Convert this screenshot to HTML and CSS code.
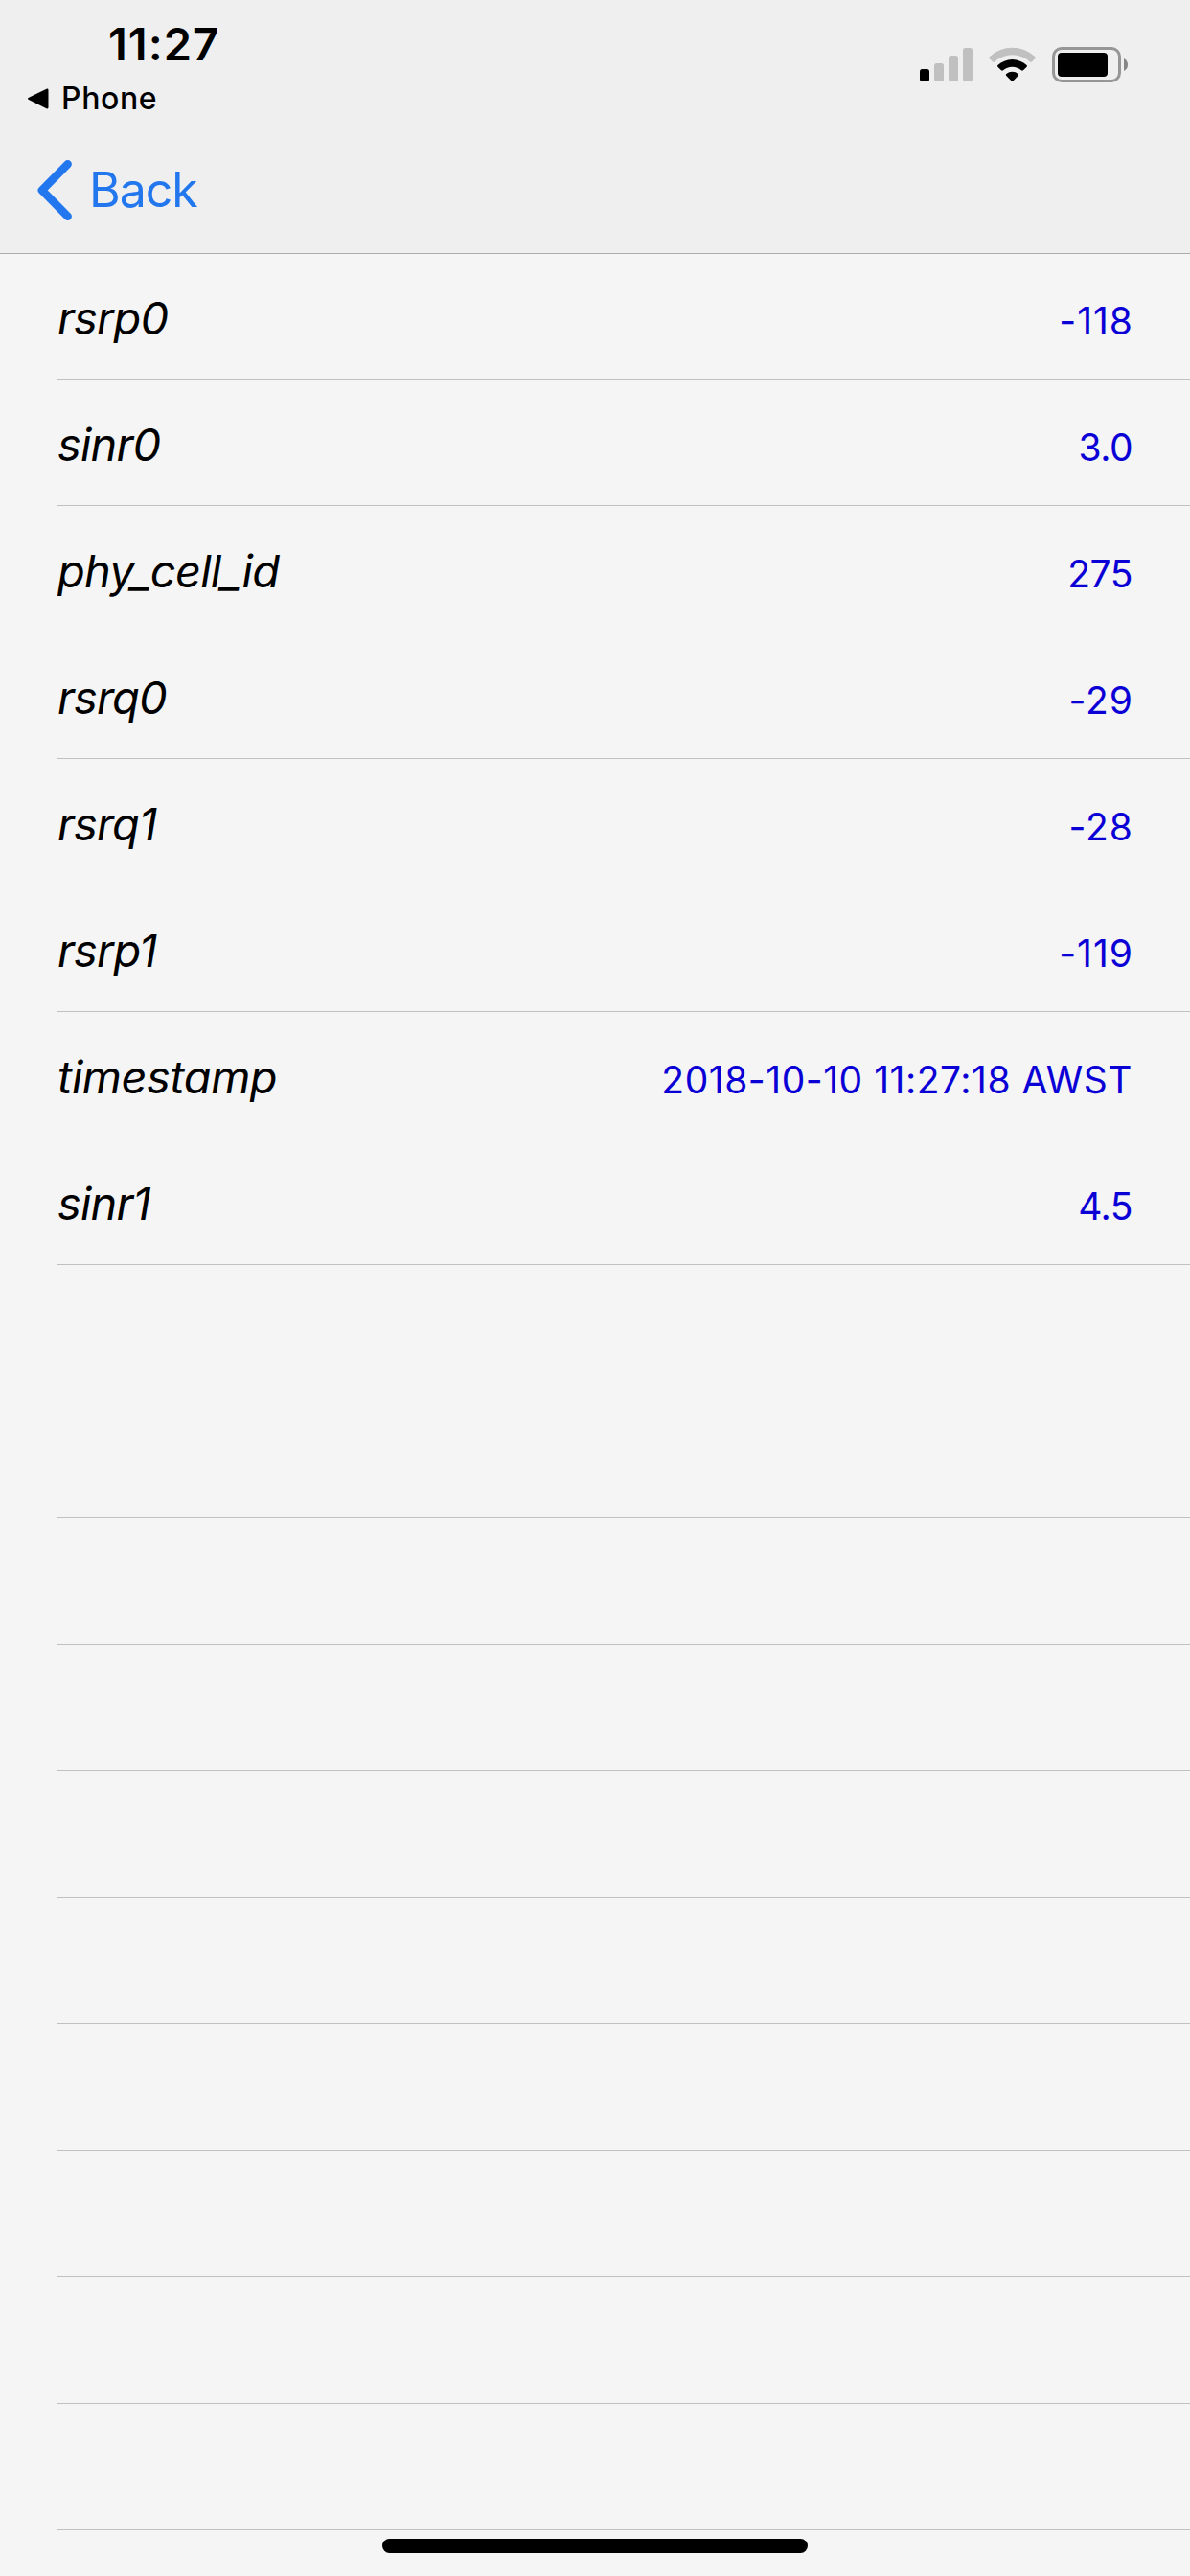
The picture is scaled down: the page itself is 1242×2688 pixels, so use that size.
FILE: index.html
```html
<!DOCTYPE html>
<html lang="en">
<head>
<meta charset="utf-8">
<title>Serving Cell</title>
<link rel="stylesheet" href="styles.css">
</head>
<body>
<div class="screen">
  <header class="header">
    <div class="status">
      <div class="status-left">
        <div class="clock">11:27</div>
        <div class="return">
          <svg class="return-icon" width="22" height="22" viewBox="0 0 22 22"><path d="M1 9.8 L19.5 .7 Q21.5 0 21.5 2 V20 Q21.5 22 19.5 21.3 L1 12 Q-1 10.9 1 9.8Z"/></svg>
          <span class="return-text">Phone</span>
        </div>
      </div>
      <div class="status-right">
        <svg class="signal" width="55" height="35" viewBox="0 0 55 35">
          <rect x="0" y="22" width="10" height="13" rx="2.5" fill="#000"/>
          <g fill="#c0c0c0"><rect x="15" y="16" width="10" height="19" rx="2.5"/><rect x="30" y="8" width="10" height="27" rx="2.5"/><rect x="45" y="0" width="10" height="35" rx="2.5"/></g>
        </svg>
        <svg class="wifi" width="49" height="36" viewBox="0 0 49 36">
          <path fill="#c0c0c0" d="M.6 10.2 A35 35 0 0 1 48.4 10.2 Q49.2 11.2 48.4 12 L45 15.5 Q44 16.3 43 15.5 A27.5 27.5 0 0 0 6 15.5 Q5 16.3 4 15.5 L.6 12 Q-.2 11.2 .6 10.2Z"/>
          <path d="M9.4 19 A22.3 22.3 0 0 1 39.6 19 Q40.4 20 39.6 20.8 L36 24.3 Q35 25.2 34 24.3 A14.5 14.5 0 0 0 15 24.3 Q14 25.2 13 24.3 L9.4 20.8 Q8.6 20 9.4 19Z"/>
          <path d="M18.3 28 A9.8 9.8 0 0 1 30.7 28 Q31.6 29 30.7 30 L25.5 35.3 Q24.5 36.2 23.5 35.3 L18.3 30 Q17.4 29 18.3 28Z"/>
        </svg>
        <svg class="battery" width="79" height="37" viewBox="0 0 79 37">
          <rect x="1.5" y="1.5" width="69" height="34" rx="8.5" fill="none" stroke="#969696" stroke-width="3"/>
          <rect x="6" y="6" width="52" height="25" rx="4"/>
          <path fill="#868686" d="M75 12 Q79 14 79 18.5 T75 25Z"/>
        </svg>
      </div>
    </div>
    <nav class="nav">
      <svg class="chevron" width="36" height="63" viewBox="0 0 36 63"><path d="M31.7 4.3 L4.8 31.5 L31.7 58.7" fill="none" stroke="#2277ee" stroke-width="8.4" stroke-linecap="round" stroke-linejoin="round"/></svg>
      <span class="back">Back</span>
    </nav>
  </header>
  <main class="list">
    <div class="row"><span class="label">rsrp0</span><span class="value negative">-118</span></div>
    <div class="row"><span class="label">sinr0</span><span class="value">3.0</span></div>
    <div class="row"><span class="label">phy_cell_id</span><span class="value">275</span></div>
    <div class="row"><span class="label">rsrq0</span><span class="value negative">-29</span></div>
    <div class="row"><span class="label">rsrq1</span><span class="value negative">-28</span></div>
    <div class="row"><span class="label">rsrp1</span><span class="value negative">-119</span></div>
    <div class="row"><span class="label wide">timestamp</span><span class="value date">2018-10-10 11:27:18 AWST</span></div>
    <div class="row"><span class="label">sinr1</span><span class="value">4.5</span></div>
    <div class="row"></div>
    <div class="row"></div>
    <div class="row"></div>
    <div class="row"></div>
    <div class="row"></div>
    <div class="row"></div>
    <div class="row"></div>
    <div class="row"></div>
    <div class="row"></div>
    <div class="row"></div>
  </main>
  <div class="home-indicator"></div>
</div>
</body>
</html>
```
FILE: styles.css
```css
* { box-sizing: border-box; }
body { margin: 0; background: #f5f5f5; color: #000; font-family: Inter, "Liberation Sans", sans-serif; }
svg { display: block; }
.screen { position: relative; height: 2688px; overflow: hidden; }
.header { height: 265px; background: #efefef; border-bottom: 1px solid #acacac; }
.status { display: flex; justify-content: space-between; height: 132px; padding: 16px 65px 0 29px; }
.clock { padding-left: 84px; font-size: 47px; font-weight: 600; line-height: 60px; letter-spacing: 1px; }
.return { display: flex; align-items: center; gap: 13px; margin-top: 7px; }
.return-text { font-size: 32px; font-weight: 500; line-height: 40px; letter-spacing: 0.6px; }
.status-right { display: flex; align-items: flex-start; padding-top: 33px; }
.signal { margin-top: 1px; }
.wifi { margin-left: 17px; }
.battery { margin-left: 17px; }
.nav { display: flex; align-items: center; gap: 18px; height: 132px; padding-left: 39px; }
.back { font-size: 50px; line-height: 60px; letter-spacing: -1px; color: #2277ee; }
.list { margin-top: -1px; }
.row { display: flex; align-items: baseline; justify-content: space-between; height: 132px; margin-left: 60px; padding: 3px 60px 0 0; border-bottom: 1px solid #c1c1c2; }
.label { font-size: 47px; font-style: italic; line-height: 129px; letter-spacing: -0.8px; }
.label.wide { letter-spacing: -0.5px; }
.value { font-size: 39px; letter-spacing: -0.5px; color: #0a00d6; }
.value.negative { margin-right: -1px; letter-spacing: 1px; }
.value.date { letter-spacing: 0.52px; }
.home-indicator { position: absolute; left: 399px; bottom: 24px; width: 444px; height: 15px; border-radius: 8px; background: #000; }
```
